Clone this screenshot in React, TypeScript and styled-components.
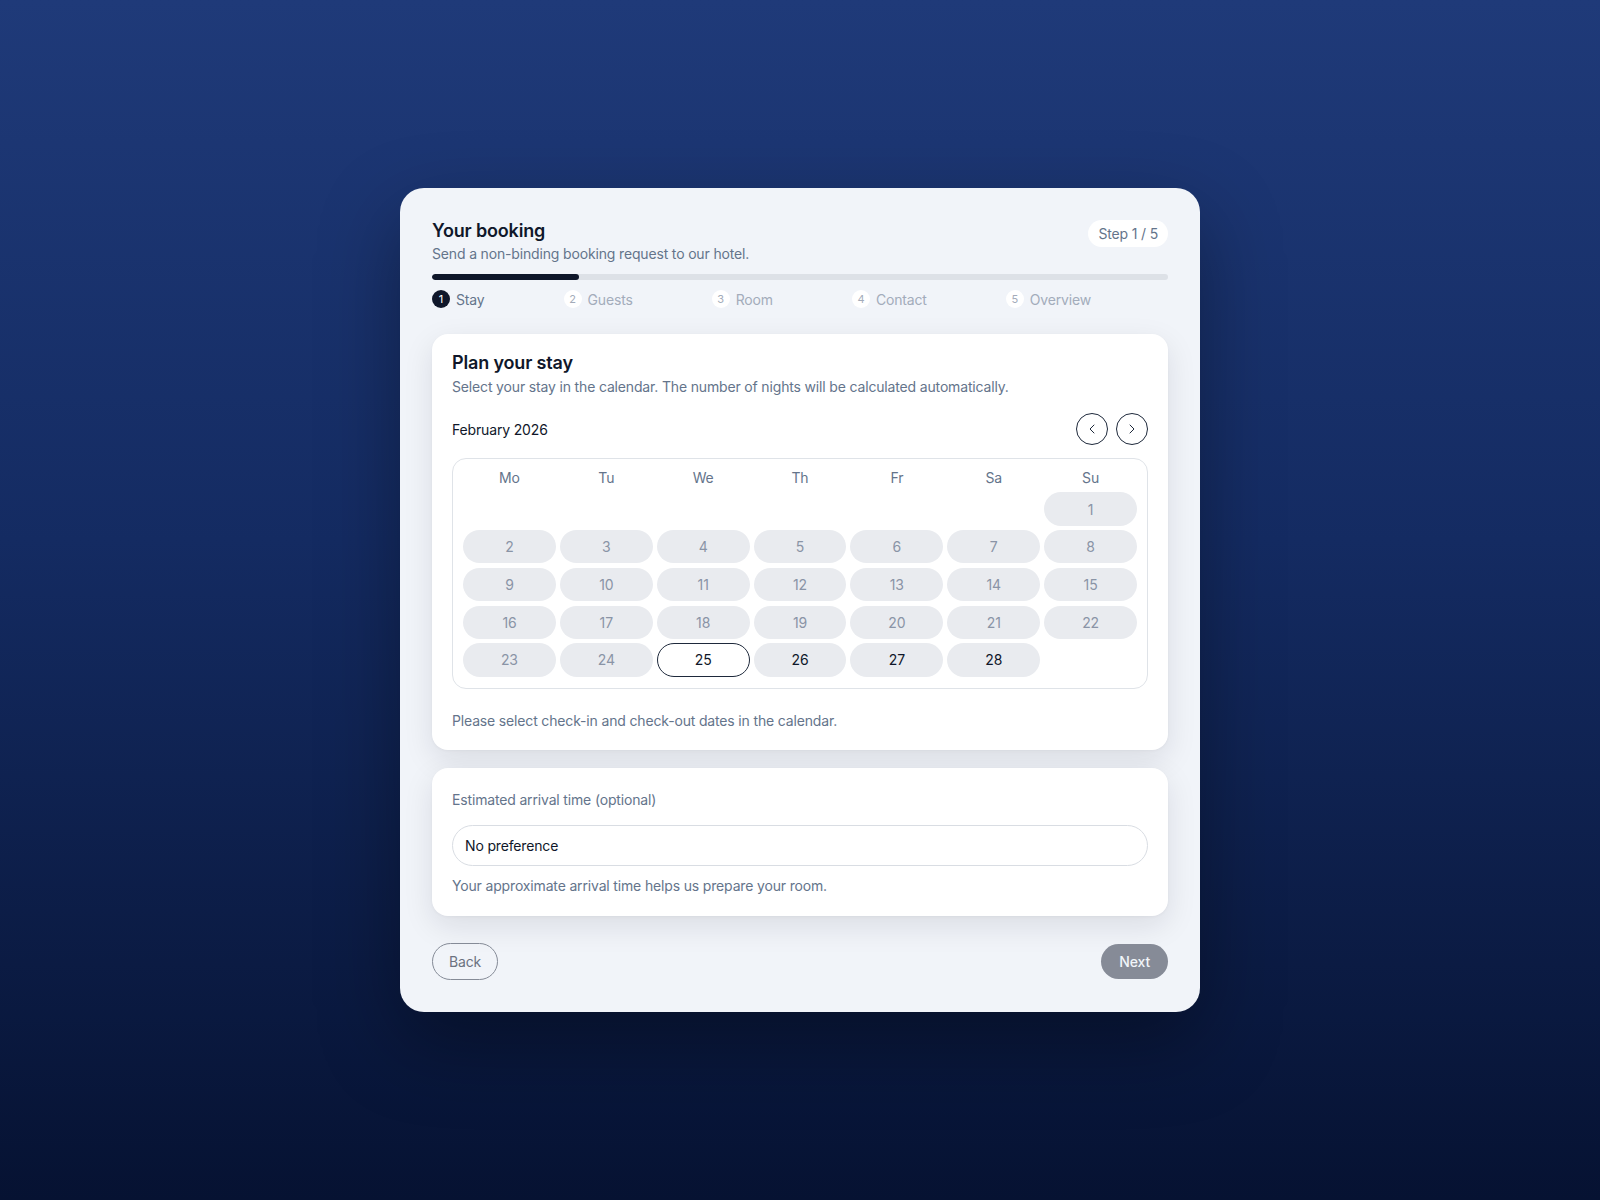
import React from "react";
import styled, { createGlobalStyle } from "styled-components";
import { ChevronLeft, ChevronRight } from "lucide-react";

const GlobalStyle = createGlobalStyle`
  * { box-sizing: border-box; }
  html, body { margin: 0; padding: 0; }
  body {
    font-family: Inter, "Noto Sans", "Liberation Sans", sans-serif;
    letter-spacing: -0.01em;
    background: linear-gradient(180deg, #1f3a79 0%, #142b62 45%, #061232 100%);
    min-height: 1200px;
    color: #0f172a;
  }
  button { letter-spacing: inherit; }
`;

const Page = styled.div`
  min-height: 1200px;
  display: flex;
  align-items: center;
  justify-content: center;
`;

const Shell = styled.div`
  width: 800px;
  background: #f1f4f9;
  border-radius: 24px;
  padding: 32px 32px 32px;
  box-shadow: 0 30px 80px rgba(0, 0, 0, 0.35);
`;

const Header = styled.div`
  display: flex;
  justify-content: space-between;
  align-items: flex-start;
`;

const Title = styled.h1`
  margin: 0;
  font-size: 18px;
  line-height: 22px;
  font-weight: 600;
  color: #0f172a;
`;

const Subtitle = styled.p`
  margin: 2px 0 0;
  font-size: 14px;
  line-height: 20px;
  color: #64748b;
`;

const StepBadge = styled.div`
  margin-top: 0;
  height: 27px;
  padding: 0 10px;
  border-radius: 999px;
  background: #ffffff;
  color: #64748b;
  font-size: 14px;
  display: flex;
  align-items: center;
`;

const Track = styled.div`
  margin-top: 10px;
  height: 6px;
  border-radius: 999px;
  background: #dde1e7;
  overflow: hidden;
`;

const Fill = styled.div`
  height: 100%;
  border-radius: 999px;
  background: #0f172a;
`;

const Steps = styled.div`
  margin-top: 9px;
  display: flex;
  gap: 79px;
  height: 20px;
  align-items: center;
`;

const StepItem = styled.div`
  display: flex;
  align-items: center;
  gap: 6px;
`;

const StepDot = styled.span<{ $active?: boolean }>`
  width: 18px;
  height: 18px;
  border-radius: 50%;
  display: flex;
  align-items: center;
  justify-content: center;
  font-size: 11px;
  background: ${(p) => (p.$active ? "#0f172a" : "#ffffff")};
  color: ${(p) => (p.$active ? "#ffffff" : "#a3abb9")};
`;

const StepLabel = styled.span<{ $active?: boolean }>`
  font-size: 14px;
  color: ${(p) => (p.$active ? "#64748b" : "#a3acbb")};
`;

const Panel = styled.section<{ $first?: boolean }>`
  margin-top: ${(p) => (p.$first ? "25px" : "18px")};
  background: #ffffff;
  border-radius: 16px;
  padding: ${(p) => (p.$first ? "19px 20px 19px" : "22px 20px 20px")};
  box-shadow: 0 10px 30px rgba(15, 23, 42, 0.1), 0 1px 3px rgba(15, 23, 42, 0.04);
`;

const PanelTitle = styled.h2`
  margin: 0;
  font-size: 18px;
  line-height: 20px;
  font-weight: 600;
  color: #0f172a;
`;

const Muted = styled.p<{ $top?: number }>`
  margin: ${(p) => p.$top ?? 0}px 0 0;
  font-size: 14px;
  line-height: 20px;
  color: #64748b;
`;

const MonthRow = styled.div`
  margin-top: 16px;
  display: flex;
  justify-content: space-between;
  align-items: center;
  height: 32px;
`;

const Month = styled.div`
  font-size: 14px;
  font-weight: 400;
  color: #0f172a;
`;

const NavGroup = styled.div`
  display: flex;
  gap: 8px;
`;

const NavButton = styled.button`
  width: 32px;
  height: 32px;
  border-radius: 50%;
  border: 1px solid #1e293b;
  background: #ffffff;
  color: #1e293b;
  display: flex;
  align-items: center;
  justify-content: center;
  padding: 0;
  cursor: pointer;
`;

const Calendar = styled.div`
  margin-top: 13px;
  border: 1px solid #dfe3e8;
  border-radius: 14px;
  padding: 10px 10px 11px;
`;

const WeekRow = styled.div`
  display: grid;
  grid-template-columns: repeat(7, 1fr);
  gap: 4px;
  height: 18px;
  margin-bottom: 5px;
`;

const WeekDay = styled.div`
  text-align: center;
  font-size: 14px;
  line-height: 18px;
  color: #64748b;
`;

const DayGrid = styled.div`
  display: grid;
  grid-template-columns: repeat(7, 1fr);
  column-gap: 4px;
  row-gap: 4.4px;
`;

const Day = styled.button<{ $available?: boolean; $selected?: boolean }>`
  height: 33.3px;
  border-radius: 999px;
  font-family: inherit;
  font-size: 14px;
  font-weight: 400;
  padding: 0;
  border: 1px solid ${(p) => (p.$selected ? "#1e293b" : "transparent")};
  background: ${(p) => (p.$selected ? "#ffffff" : "#e9ebef")};
  color: ${(p) => (p.$available || p.$selected ? "#0f172a" : "#8a94a6")};
  cursor: ${(p) => (p.$available || p.$selected ? "pointer" : "default")};
`;

const Blank = styled.div`
  height: 33.3px;
`;

const Field = styled.div`
  margin-top: 15px;
  height: 41px;
  border: 1px solid #d9dde3;
  border-radius: 999px;
  padding: 0 12px;
  display: flex;
  align-items: center;
  font-size: 14px;
  color: #0f172a;
`;

const Footer = styled.div`
  margin-top: 27px;
  display: flex;
  justify-content: space-between;
  align-items: center;
`;

const BackButton = styled.button`
  height: 37px;
  padding: 0 16px;
  border-radius: 999px;
  border: 1px solid #858b97;
  background: transparent;
  font-family: inherit;
  font-size: 14px;
  color: #6b7280;
  cursor: pointer;
`;

const NextButton = styled.button`
  height: 35px;
  padding: 0 18px;
  border-radius: 999px;
  border: none;
  background: #868b97;
  font-family: inherit;
  font-size: 14px;
  font-weight: 500;
  color: #f1f5f9;
  cursor: not-allowed;
`;

const steps = ["Stay", "Guests", "Room", "Contact", "Overview"];
const weekdays = ["Mo", "Tu", "We", "Th", "Fr", "Sa", "Su"];

export default function App() {
  const cells: (number | null)[] = [null, null, null, null, null, null];
  for (let d = 1; d <= 28; d++) cells.push(d);
  cells.push(null);

  return (
    <>
      <GlobalStyle />
      <Page>
        <Shell>
          <Header>
            <div>
              <Title>Your booking</Title>
              <Subtitle>Send a non-binding booking request to our hotel.</Subtitle>
            </div>
            <StepBadge>Step 1 / 5</StepBadge>
          </Header>
          <Track>
            <Fill style={{ width: `${(1 / 5) * 100}%` }} />
          </Track>
          <Steps>
            {steps.map((s, i) => (
              <StepItem key={s}>
                <StepDot $active={i === 0}>{i + 1}</StepDot>
                <StepLabel $active={i === 0}>{s}</StepLabel>
              </StepItem>
            ))}
          </Steps>

          <Panel $first>
            <PanelTitle>Plan your stay</PanelTitle>
            <Muted $top={4}>
              Select your stay in the calendar. The number of nights will be calculated automatically.
            </Muted>
            <MonthRow>
              <Month>February 2026</Month>
              <NavGroup>
                <NavButton aria-label="Previous month">
                  <ChevronLeft size={16} strokeWidth={1.5} />
                </NavButton>
                <NavButton aria-label="Next month">
                  <ChevronRight size={16} strokeWidth={1.5} />
                </NavButton>
              </NavGroup>
            </MonthRow>
            <Calendar>
              <WeekRow>
                {weekdays.map((w) => (
                  <WeekDay key={w}>{w}</WeekDay>
                ))}
              </WeekRow>
              <DayGrid>
                {cells.map((d, i) =>
                  d === null ? (
                    <Blank key={i} />
                  ) : (
                    <Day key={i} $selected={d === 25} $available={d > 25}>
                      {d}
                    </Day>
                  )
                )}
              </DayGrid>
            </Calendar>
            <Muted $top={22}>Please select check-in and check-out dates in the calendar.</Muted>
          </Panel>

          <Panel>
            <Muted>Estimated arrival time (optional)</Muted>
            <Field>No preference</Field>
            <Muted $top={10}>Your approximate arrival time helps us prepare your room.</Muted>
          </Panel>

          <Footer>
            <BackButton>Back</BackButton>
            <NextButton>Next</NextButton>
          </Footer>
        </Shell>
      </Page>
    </>
  );
}
